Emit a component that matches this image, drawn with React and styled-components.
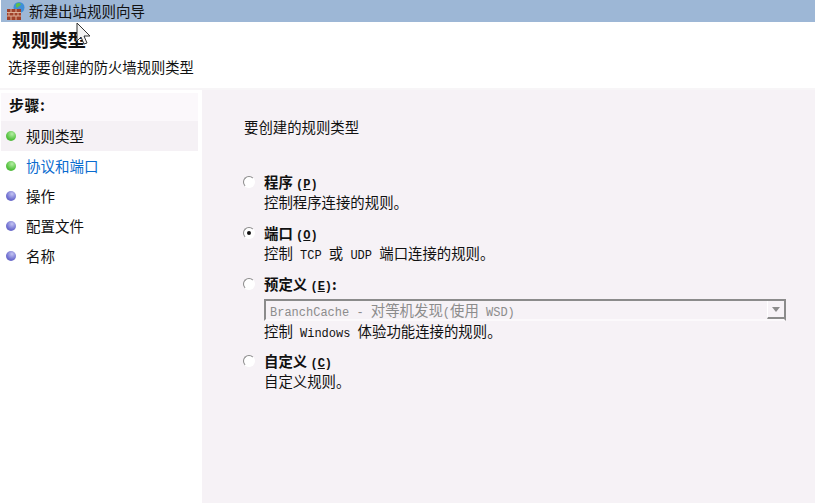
import React from 'react';
import styled, { createGlobalStyle } from 'styled-components';

const GlobalStyle = createGlobalStyle`
  html, body {
    margin: 0;
    padding: 0;
    background: #ffffff;
    overflow: hidden;
  }
  body {
    font-family: "Noto Sans CJK SC", "Liberation Sans", sans-serif;
    font-size: 14.4px;
    color: #111;
  }
`;

const Wizard = styled.div`
  position: relative;
  width: 815px;
  height: 503px;
  display: flex;
  flex-direction: column;
  overflow: hidden;
`;

const TitleBar = styled.div`
  height: 22px;
  flex: none;
  margin-left: 1px;
  display: flex;
  align-items: center;
  gap: 4px;
  padding-left: 5px;
  background: #9db7d6;
  font-size: 14.5px;
  line-height: 20px;
`;

const Header = styled.header`
  height: 66px;
  flex: none;
  padding-left: 12px;
  border-bottom: 2px solid #f7f5f7;
`;

const Heading = styled.h1`
  margin: 0;
  padding-top: 7px;
  font-size: 18.5px;
  line-height: 20px;
  font-weight: 700;
`;

const Subheading = styled.p`
  margin: 8px 0 0 -4px;
  font-size: 14.3px;
  line-height: 20px;
`;

const Body = styled.div`
  flex: 1;
  display: grid;
  grid-template-columns: 198px 1fr;
  gap: 4px;
  background: #ffffff;
`;

const Steps = styled.nav`
  padding-top: 3px;
  margin-left: 1px;
`;

const StepsTitle = styled.div`
  height: 28px;
  padding-left: 8px;
  font-size: 15px;
  line-height: 24px;
  font-weight: 700;
  background: #fbf8fb;
  letter-spacing: 0.5px;
`;

const StepRow = styled.div`
  height: 30px;
  display: flex;
  align-items: center;
  gap: 10px;
  padding-left: 5px;
  font-size: 14.5px;
  line-height: 30px;
  background: ${(p) => (p.$active ? '#f5f1f5' : 'transparent')};
  color: ${(p) => (p.$link ? '#0a6ccf' : '#111')};
`;

const Dot = styled.span`
  width: 10px;
  height: 10px;
  flex: none;
  border-radius: 50%;
  background: ${(p) =>
    p.$done
      ? 'radial-gradient(circle at 60% 30%, #b5eea5 0, #55c23f 60%, #4aa83a 100%)'
      : 'radial-gradient(circle at 60% 30%, #c4c4f2 0, #6f6fd0 60%, #5c5cb8 100%)'};
`;

const Content = styled.main`
  background: #f6f2f6;
  padding: 27px 29px 0 42px;
`;

const Prompt = styled.div`
  font-size: 14.4px;
  line-height: 20px;
  margin-bottom: 36px;
`;

const Option = styled.div`
  display: flex;
  gap: 9px;
  margin-left: -1px;
  margin-bottom: ${(p) => p.$gap}px;
`;

const Radio = styled.span`
  position: relative;
  width: 12px;
  height: 12px;
  flex: none;
  margin-top: 3px;
  box-sizing: border-box;
  border-radius: 50%;
  background: #fff;
  border: 1px solid;
  border-color: #8a8a8a #fff #fff #8a8a8a;

  &::after {
    content: '';
    display: ${(p) => (p.$checked ? 'block' : 'none')};
    position: absolute;
    left: 3px;
    top: 3px;
    width: 4px;
    height: 4px;
    border-radius: 50%;
    background: #111;
  }
`;

const OptionText = styled.div`
  flex: 1;
  min-width: 0;
`;

const OptionLabel = styled.div`
  font-size: 14.4px;
  line-height: 18px;
  height: 18px;
  font-weight: 700;
`;

const Mnemonic = styled.span`
  font-family: "Liberation Mono", monospace;
  font-size: 12px;
  font-weight: 700;
  line-height: 1;
  u {
    text-underline-offset: 1px;
  }
`;

const Description = styled.div`
  font-size: 14.4px;
  line-height: 19px;
  padding-top: 1px;
`;

const Latin = styled.span`
  font-family: "Liberation Mono", monospace;
  font-size: 12px;
  line-height: 1;
  white-space: pre;
`;

const Select = styled.div`
  height: 22px;
  margin: 6px 0 -1px;
  box-sizing: border-box;
  display: flex;
  align-items: center;
  justify-content: space-between;
  border: 2px solid #8b8b8b;
  border-bottom-color: #fbf9fb;
  background: #f6f2f6;
  color: #8c8c8c;
  font-size: 14.4px;
  line-height: 18px;
  padding-left: 4px;
`;

const SelectArrow = styled.span`
  width: 17px;
  height: 18px;
  display: flex;
  align-items: center;
  justify-content: center;
  background: #f6f2f6;
  border-left: 1px solid #fff;
  border-bottom: 2px solid #8b8b8b;
  box-sizing: border-box;

  &::after {
    content: '';
    border-style: solid;
    border-width: 5px 4px 0;
    border-color: #8b8b8b transparent transparent;
  }
`;

const Pointer = styled.svg`
  position: absolute;
  left: 76px;
  top: 22px;
  width: 15px;
  height: 24px;
`;

const WallIcon = () => (
  <svg width="19" height="19" viewBox="0 0 19 19">
    <circle cx="13" cy="5.500" r="5.500" fill="#3f8fd8" />
    <path d="M10 2c2-1.500 4-1 5 .5-1 1.500-3 2-4 3.500-1-1-1.500-2.500-1-4z" fill="#5cbf4a" />
    <path d="M1 7h14v11H1z" fill="#a0412a" />
    <path d="M1 10.500h14M1 14h14M5 7v3.500M10 7v3.500M3 10.500V14M8 10.500V14M12 10.500V14M5 14v4M10 14v4" stroke="#dcae96" strokeWidth="1" fill="none" />
  </svg>
);

const steps = [
  { label: '规则类型', done: true, active: true },
  { label: '协议和端口', done: true, link: true },
  { label: '操作' },
  { label: '配置文件' },
  { label: '名称' },
];

export default function App() {
  return (
    <Wizard>
      <GlobalStyle />
      <TitleBar>
        <WallIcon />
        新建出站规则向导
      </TitleBar>
      <Header>
        <Heading>规则类型</Heading>
        <Subheading>选择要创建的防火墙规则类型</Subheading>
      </Header>
      <Body>
        <Steps>
          <StepsTitle>步骤:</StepsTitle>
          {steps.map((step) => (
            <StepRow key={step.label} $active={step.active} $link={step.link}>
              <Dot $done={step.done} />
              {step.label}
            </StepRow>
          ))}
        </Steps>
        <Content>
          <Prompt>要创建的规则类型</Prompt>
          <Option $gap={13}>
            <Radio />
            <OptionText>
              <OptionLabel>程序 <Mnemonic>(<u>P</u>)</Mnemonic></OptionLabel>
              <Description>控制程序连接的规则。</Description>
            </OptionText>
          </Option>
          <Option $gap={13}>
            <Radio $checked />
            <OptionText>
              <OptionLabel>端口 <Mnemonic>(<u>O</u>)</Mnemonic></OptionLabel>
              <Description>控制<Latin> TCP </Latin>或<Latin> UDP </Latin>端口连接的规则。</Description>
            </OptionText>
          </Option>
          <Option $gap={12}>
            <Radio />
            <OptionText>
              <OptionLabel>预定义 <Mnemonic>(<u>E</u>)</Mnemonic>:</OptionLabel>
              <Select>
                <span><Latin>BranchCache - </Latin>对等机发现<Latin>(</Latin>使用<Latin> WSD)</Latin></span>
                <SelectArrow />
              </Select>
              <Description>控制<Latin> Windows </Latin>体验功能连接的规则。</Description>
            </OptionText>
          </Option>
          <Option $gap={0}>
            <Radio />
            <OptionText>
              <OptionLabel>自定义 <Mnemonic>(<u>C</u>)</Mnemonic></OptionLabel>
              <Description>自定义规则。</Description>
            </OptionText>
          </Option>
        </Content>
      </Body>
      <Pointer viewBox="0 0 15 24">
        <path d="M1 1v18l4-4 3 7 3-1-3-7h6z" fill="#f4f4f4" stroke="#333" strokeWidth="1" />
      </Pointer>
    </Wizard>
  );
}
